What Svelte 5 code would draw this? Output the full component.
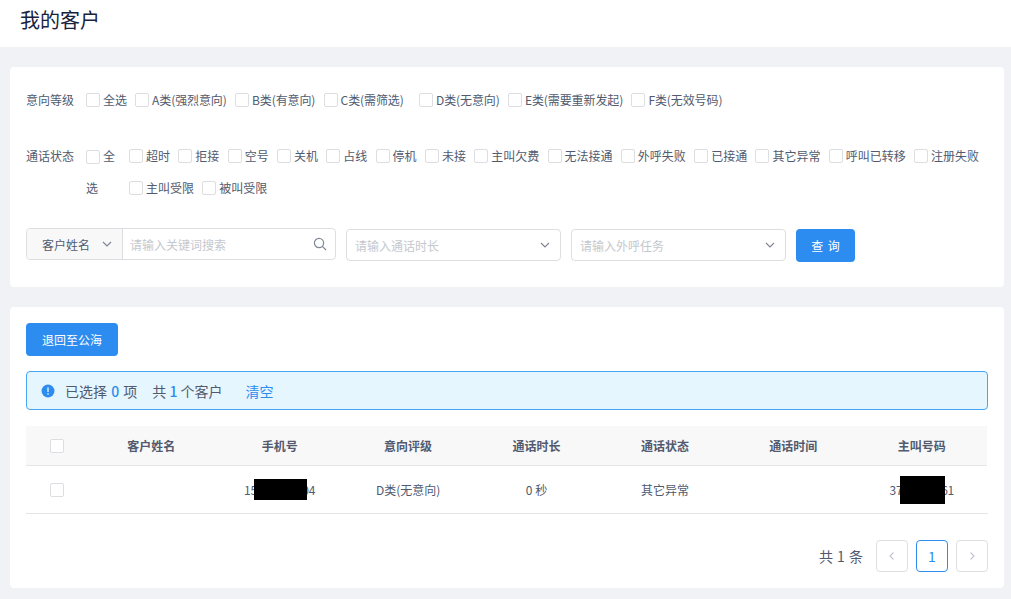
<script>
  const levels = ["全选", "A类(强烈意向)", "B类(有意向)", "C类(需筛选)", "D类(无意向)", "E类(需要重新发起)", "F类(无效号码)"];
  const states = ["超时", "拒接", "空号", "关机", "占线", "停机", "未接", "主叫欠费", "无法接通", "外呼失败", "已接通", "其它异常", "呼叫已转移", "注册失败", "主叫受限", "被叫受限"];
  const columns = ["客户姓名", "手机号", "意向评级", "通话时长", "通话状态", "通话时间", "主叫号码"];
</script>

<div class="page">
  <header class="top">我的客户</header>

  <main class="content">
    <section class="card filters">
      <div class="row level">
        <span class="label">意向等级</span>
        <div class="checks">
          {#each levels as item}
            <label class="check"><i class="box"></i><span>{item}</span></label>
          {/each}
        </div>
      </div>

      <div class="row status">
        <span class="label">通话状态</span>
        <div class="all"><i class="box"></i><span>全选</span></div>
        <div class="checks wrap">
          {#each states as item}
            <label class="check"><i class="box"></i><span>{item}</span></label>
          {/each}
        </div>
      </div>

      <div class="search">
        <div class="combo">
          <div class="prefix">
            <span>客户姓名</span>
            <svg class="chev" viewBox="0 0 12 12"><path d="M2 4l4 4 4-4" /></svg>
          </div>
          <div class="kw">
            <span class="ph">请输入关键词搜索</span>
            <svg class="glass" viewBox="0 0 14 14"><circle cx="6" cy="6" r="4.6" /><path d="M9.4 9.4L13 13" /></svg>
          </div>
        </div>
        <div class="select">
          <span class="ph">请输入通话时长</span>
          <svg class="chev" viewBox="0 0 12 12"><path d="M2 4l4 4 4-4" /></svg>
        </div>
        <div class="select">
          <span class="ph">请输入外呼任务</span>
          <svg class="chev" viewBox="0 0 12 12"><path d="M2 4l4 4 4-4" /></svg>
        </div>
        <button class="btn query">查 询</button>
      </div>
    </section>

    <section class="card list">
      <button class="btn back">退回至公海</button>

      <div class="alert">
        <svg class="info" viewBox="0 0 14 14"><circle cx="7" cy="7" r="6.5" /><rect x="6.4" y="3.4" width="1.2" height="4.6" /><rect x="6.4" y="9.2" width="1.2" height="1.4" /></svg>
        <span class="selected">已选择 <b>0</b> 项</span>
        <span class="total">共 <b>1</b> 个客户</span>
        <span class="clear">清空</span>
      </div>

      <div class="table">
        <div class="tr head">
          <div class="td first"><i class="box"></i></div>
          {#each columns as col}
            <div class="td">{col}</div>
          {/each}
        </div>
        <div class="tr body">
          <div class="td first"><i class="box"></i></div>
          <div class="td"></div>
          <div class="td"><span class="secret">15000000004<i class="mask phone"></i></span></div>
          <div class="td">D类(无意向)</div>
          <div class="td">0 秒</div>
          <div class="td">其它异常</div>
          <div class="td"></div>
          <div class="td"><span class="secret">3700000061<i class="mask caller"></i></span></div>
        </div>
      </div>

      <div class="pager">
        <span class="count">共 1 条</span>
        <span class="pg"><svg viewBox="0 0 12 12"><path d="M7.5 2.5L4 6l3.5 3.5" /></svg></span>
        <span class="pg active">1</span>
        <span class="pg"><svg viewBox="0 0 12 12"><path d="M4.5 2.5L8 6l-3.5 3.5" /></svg></span>
      </div>
    </section>
  </main>
</div>

<style>
  :global(body) {
    margin: 0;
    background: #f0f2f5;
  }

  .page {
    height: 599px;
    overflow: hidden;
    font-family: "Noto Sans CJK SC", "Noto Sans", sans-serif;
    font-size: 12px;
    color: #515a6e;
  }

  .top {
    height: 47px;
    box-sizing: border-box;
    padding-left: 20px;
    background: #fff;
    font-size: 20px;
    line-height: 40px;
    color: #17233d;
  }

  .content {
    display: flex;
    flex-direction: column;
    gap: 20px;
    padding: 20px 7px 0 10px;
  }

  .card {
    background: #fff;
    border-radius: 4px;
    padding: 16px;
  }

  .filters {
    height: 220px;
    box-sizing: border-box;
    padding-top: 17px;
  }

  .row {
    display: flex;
    line-height: 32px;
  }

  .label {
    width: 60px;
    flex: none;
  }

  .checks {
    display: flex;
    gap: 8.3px;
  }

  .level .check {
    letter-spacing: -0.1px;
  }

  .level .check:nth-child(4) {
    margin-right: 7px;
  }

  .wrap {
    flex-wrap: wrap;
    align-content: flex-start;
    gap: 0 8.3px;
    width: 860px;
  }

  .check {
    display: flex;
    align-items: center;
    height: 32px;
  }

  .box {
    display: block;
    width: 12px;
    height: 12px;
    flex: none;
    border: 1px solid #dcdee2;
    border-radius: 2px;
    background: #fff;
  }

  .check .box {
    margin-right: 3px;
  }

  .level {
    height: 56px;
  }

  .status {
    height: 72px;
  }

  .all {
    width: 35px;
    margin-right: 8px;
    flex: none;
  }

  .all .box {
    display: inline-block;
    vertical-align: -3px;
    margin-right: 3px;
  }

  .search {
    display: flex;
    align-items: flex-start;
    margin-top: 17px;
    gap: 10px;
  }

  .combo {
    display: flex;
    width: 310px;
    height: 32px;
    box-sizing: border-box;
    border: 1px solid #dcdee2;
    border-radius: 4px;
    margin-top: -1px;
  }

  .prefix {
    display: flex;
    align-items: center;
    justify-content: space-between;
    width: 96px;
    box-sizing: border-box;
    padding: 0 9px 0 15px;
    background: #f8f8f9;
    border-right: 1px solid #dcdee2;
    border-radius: 3px 0 0 3px;
    flex: none;
  }

  .kw {
    flex: 1;
    display: flex;
    align-items: center;
    justify-content: space-between;
    padding: 0 8px 0 7px;
  }

  .select {
    display: flex;
    align-items: center;
    justify-content: space-between;
    width: 215px;
    height: 32px;
    box-sizing: border-box;
    border: 1px solid #dcdee2;
    border-radius: 4px;
    padding: 0 9px 0 8px;
  }

  .ph {
    color: #c5c8ce;
  }

  .chev {
    width: 12px;
    height: 12px;
    fill: none;
    stroke: #808695;
    stroke-width: 1.2;
  }

  .glass {
    width: 14px;
    height: 14px;
    fill: none;
    stroke: #808695;
    stroke-width: 1.2;
  }

  .btn {
    border: 0;
    border-radius: 4px;
    background: #2d8cf0;
    color: #fff;
    font: inherit;
    padding: 0;
  }

  .query {
    width: 59px;
    height: 33px;
    word-spacing: 2px;
  }

  .list {
    height: 281px;
    box-sizing: border-box;
  }

  .back {
    display: block;
    width: 92px;
    height: 33px;
  }

  .alert {
    display: flex;
    align-items: center;
    height: 39px;
    box-sizing: border-box;
    margin-top: 15px;
    padding-left: 14px;
    border: 1px solid #46a6f5;
    border-radius: 4px;
    background: #e6f6ff;
    font-size: 14px;
  }

  .info {
    width: 14px;
    height: 14px;
    margin-right: 10px;
  }

  .info circle {
    fill: #2d8cf0;
  }

  .info rect {
    fill: #fff;
  }

  .alert b {
    color: #2d8cf0;
    font-weight: 500;
  }

  .selected b {
    margin: 0 1px;
  }

  .total {
    margin-left: 15px;
  }

  .clear {
    margin-left: 23px;
    color: #2d8cf0;
  }

  .table {
    margin-top: 16px;
    width: 961px;
  }

  .tr {
    display: grid;
    grid-template-columns: 61px repeat(7, 1fr);
    align-items: center;
    text-align: center;
    box-sizing: border-box;
    padding-right: 1px;
    border-bottom: 1px solid #e4e5e7;
  }

  .head {
    height: 40px;
    background: #f8f8f9;
    font-weight: 700;
  }

  .body {
    height: 48px;
    width: 962px;
    padding-right: 2px;
  }

  .first .box {
    margin-left: 24px;
  }

  .secret {
    position: relative;
    display: inline-block;
    letter-spacing: -0.2px;
  }

  .mask {
    position: absolute;
    background: #000;
  }

  .phone {
    left: 9.5px;
    top: -2px;
    width: 53px;
    height: 21px;
  }

  .caller {
    left: 10.5px;
    top: -5px;
    width: 45px;
    height: 28px;
  }

  .pager {
    display: flex;
    align-items: center;
    justify-content: flex-end;
    gap: 8px;
    margin-top: 26px;
    width: 962px;
    color: #515a6e;
  }

  .count {
    margin-right: 5px;
    font-size: 14px;
    word-spacing: 1px;
  }

  .pg {
    display: flex;
    align-items: center;
    justify-content: center;
    width: 32px;
    height: 32px;
    box-sizing: border-box;
    border: 1px solid #dcdee2;
    border-radius: 4px;
  }

  .pg svg {
    width: 12px;
    height: 12px;
    fill: none;
    stroke: #c5c8ce;
    stroke-width: 1.2;
  }

  .active {
    border-color: #2d8cf0;
    color: #2d8cf0;
    font-size: 14px;
  }
</style>
